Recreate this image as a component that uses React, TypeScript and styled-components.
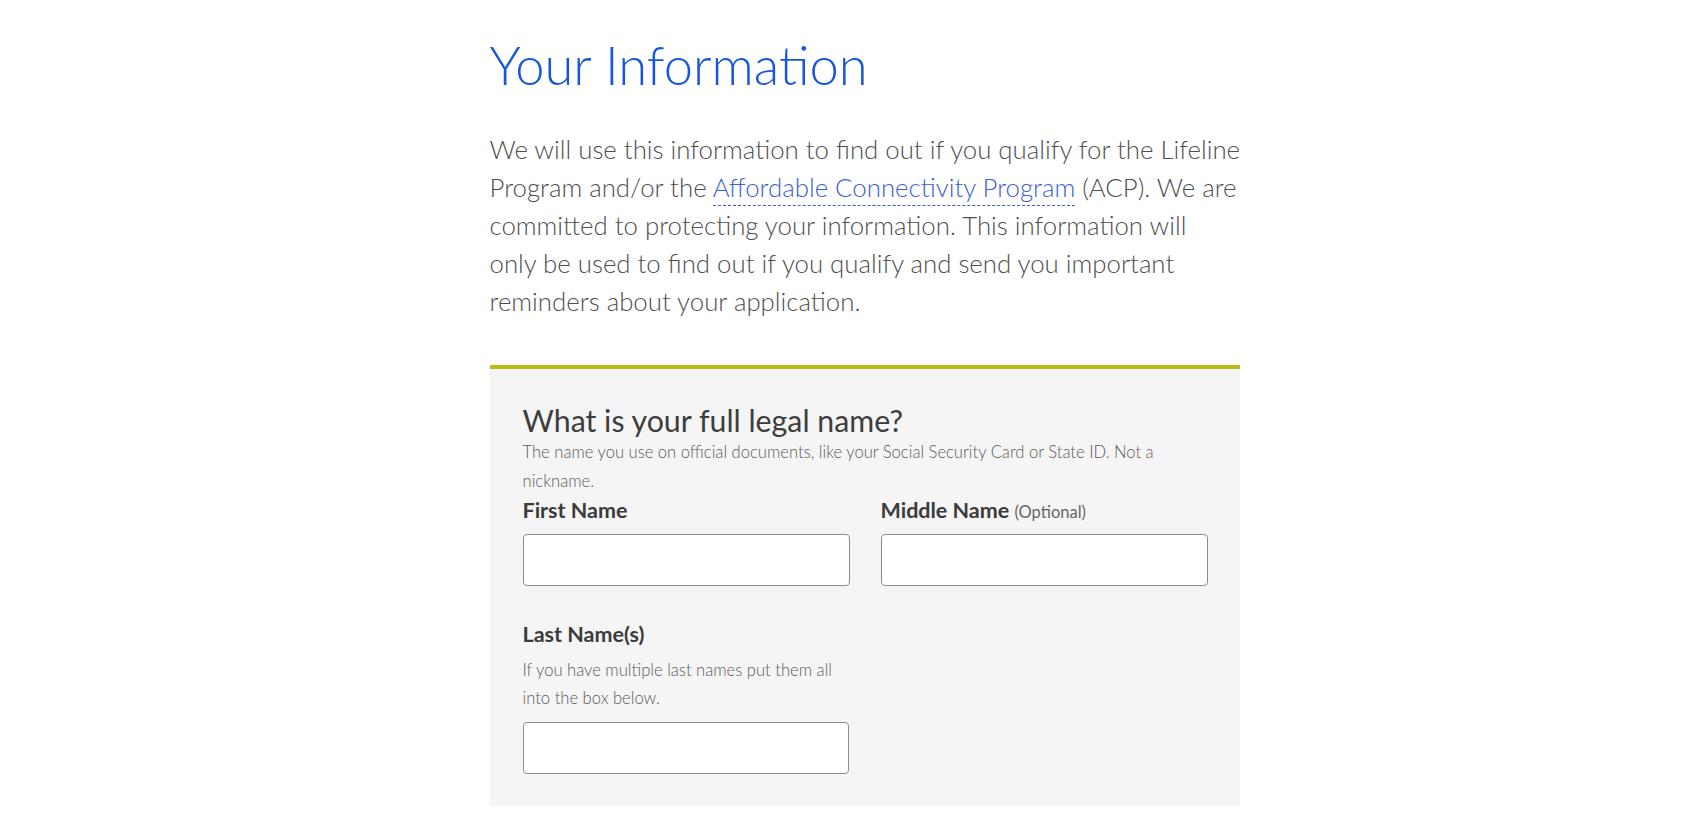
import React from 'react';
import styled, { createGlobalStyle } from 'styled-components';

const GlobalStyle = createGlobalStyle`
  body {
    margin: 0;
    background: #ffffff;
    font-family: Lato, "Open Sans", sans-serif;
    color: #4a4a4a;
  }
`;

const Page = styled.main`
  width: 780px;
  margin: 0 auto;
  padding: 33px 0 30px 29px;
  box-sizing: border-box;
`;

const Title = styled.h1`
  margin: 0;
  font-size: 52.5px;
  font-weight: 300;
  line-height: 64px;
  color: #1757d9;
`;

const Intro = styled.p`
  margin: 33px 0 0;
  width: 760px;
  font-size: 25.8px;
  font-weight: 300;
  line-height: 38px;
  color: #4f4f4f;
`;

const Glossary = styled.a`
  color: #3b5fcf;
  text-decoration: none;
  padding-bottom: 3px;
  border-bottom: 1px dashed #3b5fcf;
`;

const Card = styled.section`
  width: 750px;
  box-sizing: border-box;
  margin-top: 45px;
  border-top: 4px solid #b7bd17;
  background: #f5f5f5;
  padding: 34px 32px 32px 33px;
`;

const Question = styled.h2`
  margin: 0;
  font-size: 30.3px;
  font-weight: 400;
  line-height: 35px;
  color: #3d3d3d;
`;

const Hint = styled.p`
  margin: 0;
  font-size: 16.6px;
  font-weight: 300;
  line-height: 29px;
  color: #5a5a5a;
`;

const Row = styled.div`
  display: grid;
  grid-template-columns: 1fr 1fr;
  column-gap: 31px;
`;

const Field = styled.div<{ $half?: boolean; $gapTop?: number }>`
  display: flex;
  flex-direction: column;
  width: ${(p) => (p.$half ? '326px' : 'auto')};
  margin-top: ${(p) => p.$gapTop ?? 0}px;
`;

const Label = styled.label`
  font-size: 21.5px;
  font-weight: 700;
  line-height: 28px;
  color: #3b3b3b;
  margin-bottom: 10px;
`;

const Optional = styled.span`
  font-size: 16.5px;
  font-weight: 400;
  line-height: 1;
  color: #666666;
`;

const FieldHint = styled(Hint)`
  margin: -2px 0 10px;
  line-height: 28px;
`;

const Input = styled.input`
  height: 52px;
  box-sizing: border-box;
  border: 1px solid #8c8c8c;
  border-radius: 4px;
  background: #ffffff;
  font-family: inherit;
  font-size: 18px;
  padding: 0 12px;
  outline: none;
`;

export default function App() {
  return (
    <>
      <GlobalStyle />
      <Page>
        <Title>Your Information</Title>
        <Intro>
          We will use this information to find out if you qualify for the Lifeline
          <br />
          Program and/or the <Glossary href="#">Affordable Connectivity Program</Glossary> (ACP). We are
          <br />
          committed to protecting your information. This information will
          <br />
          only be used to find out if you qualify and send you important
          <br />
          reminders about your application.
        </Intro>
        <Card>
          <Question>What is your full legal name?</Question>
          <Hint>
            The name you use on official documents, like your Social Security Card or State ID. Not a
            nickname.
          </Hint>
          <Row>
            <Field>
              <Label htmlFor="first">First Name</Label>
              <Input id="first" type="text" />
            </Field>
            <Field>
              <Label htmlFor="middle">
                Middle Name <Optional>(Optional)</Optional>
              </Label>
              <Input id="middle" type="text" />
            </Field>
          </Row>
          <Field $half $gapTop={34}>
            <Label htmlFor="last">Last Name(s)</Label>
            <FieldHint>If you have multiple last names put them all into the box below.</FieldHint>
            <Input id="last" type="text" />
          </Field>
        </Card>
      </Page>
    </>
  );
}
